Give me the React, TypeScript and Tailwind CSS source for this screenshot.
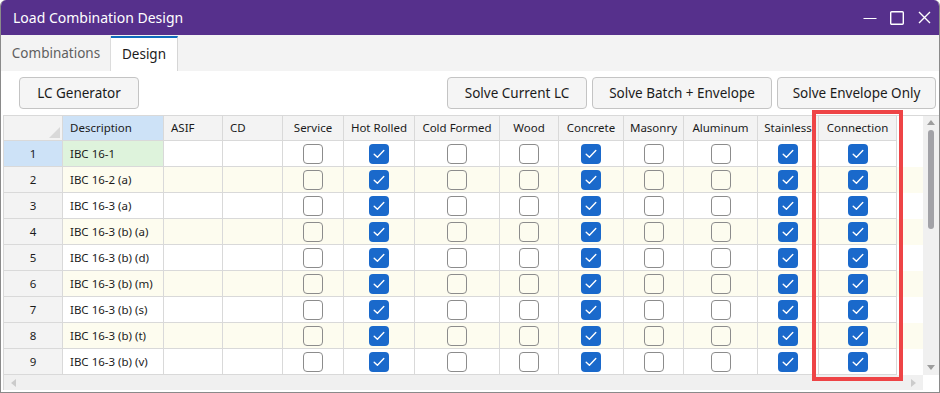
import React from 'react';

const font = { fontFamily: '"Segoe UI", "Noto Sans", "Open Sans", sans-serif' };

const names = [
  'IBC 16-1',
  'IBC 16-2 (a)',
  'IBC 16-3 (a)',
  'IBC 16-3 (b) (a)',
  'IBC 16-3 (b) (d)',
  'IBC 16-3 (b) (m)',
  'IBC 16-3 (b) (s)',
  'IBC 16-3 (b) (t)',
  'IBC 16-3 (b) (v)',
];

// checkbox columns, with the state they hold in every row
const checkCols = [
  { label: 'Service', w: 'w-[61px]', on: false },
  { label: 'Hot Rolled', w: 'w-[71px]', on: true },
  { label: 'Cold Formed', w: 'w-[85px]', on: false },
  { label: 'Wood', w: 'w-[59px]', on: false },
  { label: 'Concrete', w: 'w-[65px]', on: true },
  { label: 'Masonry', w: 'w-[60px]', on: false },
  { label: 'Aluminum', w: 'w-[74px]', on: false },
  { label: 'Stainless', w: 'w-[61px]', on: true },
  { label: 'Connection', w: 'w-[78px]', on: true },
];

function Box({ on }: { on: boolean }) {
  if (!on) return <span className="block h-5 w-5 rounded-[4px] border border-[#8c8c8c]" />;
  return (
    <span className="flex h-5 w-5 items-center justify-center rounded-[4px] bg-[#1a69cb]">
      <svg viewBox="0 0 20 20" className="h-5 w-5">
        <path d="M5.2 10.2 L8.4 13.2 L14.8 6.6" fill="none" stroke="white" strokeWidth="1.4" strokeLinecap="round" strokeLinejoin="round" />
      </svg>
    </span>
  );
}

function Btn({ label, w }: { label: string; w: string }) {
  return (
    <button className={`${w} flex h-[32px] items-center justify-center rounded-[4px] border border-[#c4c4c4] bg-[#f5f5f5] text-[13.5px] text-[#1b1b1b]`}>
      {label}
    </button>
  );
}

export default function App() {
  return (
    <div className="relative h-[393px] w-[940px] overflow-hidden rounded-t-[6px] border-x border-b border-[#8a8a8a] bg-white" style={font}>
      {/* title bar */}
      <div className="flex h-[35px] items-center bg-[#56308c] pl-[12px] pr-[8px] text-white">
        <span className="text-[14px]">Load Combination Design</span>
        <div className="ml-auto flex items-center">
          <svg width="14" height="14" viewBox="0 0 14 14" className="mr-[13px]">
            <path d="M0.5 7.5 H13.5" stroke="white" strokeWidth="1.2" />
          </svg>
          <svg width="14" height="14" viewBox="0 0 14 14" className="mr-[14px]">
            <rect x="0.7" y="0.7" width="12.6" height="12.6" rx="1" fill="none" stroke="white" strokeWidth="1.4" />
          </svg>
          <svg width="13" height="13" viewBox="0 0 13 13">
            <path d="M1 1 L12 12 M12 1 L1 12" stroke="white" strokeWidth="1.4" />
          </svg>
        </div>
      </div>

      {/* tabs */}
      <div className="flex h-[36px] items-end bg-[#f3f3f3] pl-[1px]">
        <div className="flex h-[35px] w-[109px] items-center justify-center border-r border-[#dcdcdc] text-[13.5px] text-[#5f5f5f]">
          Combinations
        </div>
        <div className="flex h-[35px] w-[67px] items-center justify-center border-r border-t-2 border-r-[#d6d6d6] border-t-[#0f6cbd] bg-white text-[13.5px] text-[#1b1b1b]">
          Design
        </div>
      </div>

      {/* toolbar */}
      <div className="flex pt-[6px] pl-[18px] pr-[3px]">
        <Btn label="LC Generator" w="w-[120px]" />
        <div className="ml-auto flex gap-[5px]">
          <Btn label="Solve Current LC" w="w-[140px]" />
          <Btn label="Solve Batch + Envelope" w="w-[180px]" />
          <Btn label="Solve Envelope Only" w="w-[159px]" />
        </div>
      </div>

      {/* grid */}
      <div className="ml-[2px] mt-[6px] flex flex-col text-[11.5px] text-[#1b1b1b]">
        <div className="flex h-[260px]">
          <div className="flex-1 border-l border-t border-[#d9d9d9]">
            <div className="flex h-[25px]">
              <div className="relative h-full w-[59px] border-b border-r border-[#d9d9d9] bg-[#f3f3f3]">
                <svg width="11" height="11" viewBox="0 0 11 11" className="absolute bottom-[2px] right-[2px]">
                  <path d="M11 0 L11 11 L0 11 Z" fill="#d9d9d9" />
                </svg>
              </div>
              <div className="flex h-full w-[101px] items-center border-b border-r border-[#d9d9d9] bg-[#cde2f7] pl-[7px]">Description</div>
              <div className="flex h-full w-[59px] items-center border-b border-r border-[#d9d9d9] bg-[#f3f3f3] pl-[7px]">ASIF</div>
              <div className="flex h-full w-[60px] items-center border-b border-r border-[#d9d9d9] bg-[#f3f3f3] pl-[7px]">CD</div>
              {checkCols.map((c) => (
                <div key={c.label} className={`${c.w} flex h-full items-center justify-center border-b border-r border-[#d9d9d9] bg-[#f3f3f3] whitespace-nowrap`}>
                  {c.label}
                </div>
              ))}
            </div>
            {names.map((n, i) => {
              const cream = i % 2 === 1;
              const rowBg = cream ? 'bg-[#fdfcef]' : 'bg-white';
              return (
                <div key={n} className={`flex h-[26px] ${rowBg}`}>
                  <div className={`flex h-full w-[59px] items-center justify-center border-b border-r border-[#d9d9d9] ${i === 0 ? 'bg-[#cde2f7]' : 'bg-[#f3f3f3]'}`}>
                    {i + 1}
                  </div>
                  <div className={`flex h-full w-[101px] items-center border-b border-r border-[#d9d9d9] pl-[7px] ${i === 0 ? 'bg-[#def3dc]' : ''}`}>
                    {n}
                  </div>
                  <div className="h-full w-[59px] border-b border-r border-[#d9d9d9]" />
                  <div className="h-full w-[60px] border-b border-r border-[#d9d9d9]" />
                  {checkCols.map((c) => (
                    <div key={c.label} className={`${c.w} flex h-full items-center justify-center border-b border-r border-[#d9d9d9]`}>
                      <Box on={c.on} />
                    </div>
                  ))}
                </div>
              );
            })}
          </div>

          {/* vertical scrollbar */}
          <div className="flex w-[16px] flex-col items-center border-t border-[#d9d9d9] bg-[#f0f0f0]">
            <svg width="8" height="5" viewBox="0 0 8 5" className="mt-[4px]">
              <path d="M4 0 L8 5 L0 5 Z" fill="#9d9d9d" />
            </svg>
            <div className="mt-[5px] h-[99px] w-[6px] rounded-full bg-[#a2a2a7]" />
            <svg width="8" height="5" viewBox="0 0 8 5" className="mb-[5px] mt-auto">
              <path d="M0 0 L8 0 L4 5 Z" fill="#9d9d9d" />
            </svg>
          </div>
        </div>

        {/* horizontal scrollbar */}
        <div className="flex h-[15px]">
          <div className="flex flex-1 items-center justify-between border-l border-[#d9d9d9] bg-[#f0f0f0] px-[7px]">
            <svg width="5" height="8" viewBox="0 0 5 8">
              <path d="M0 4 L5 0 L5 8 Z" fill="#cbcbcb" />
            </svg>
            <svg width="5" height="8" viewBox="0 0 5 8">
              <path d="M5 4 L0 0 L0 8 Z" fill="#cbcbcb" />
            </svg>
          </div>
          <div className="w-[16px] bg-white" />
        </div>
      </div>

      {/* highlight around the Connection column */}
      <div className="absolute left-[811px] top-[110px] h-[271px] w-[91px] border-[4px] border-[#ee4446]" />
    </div>
  );
}
